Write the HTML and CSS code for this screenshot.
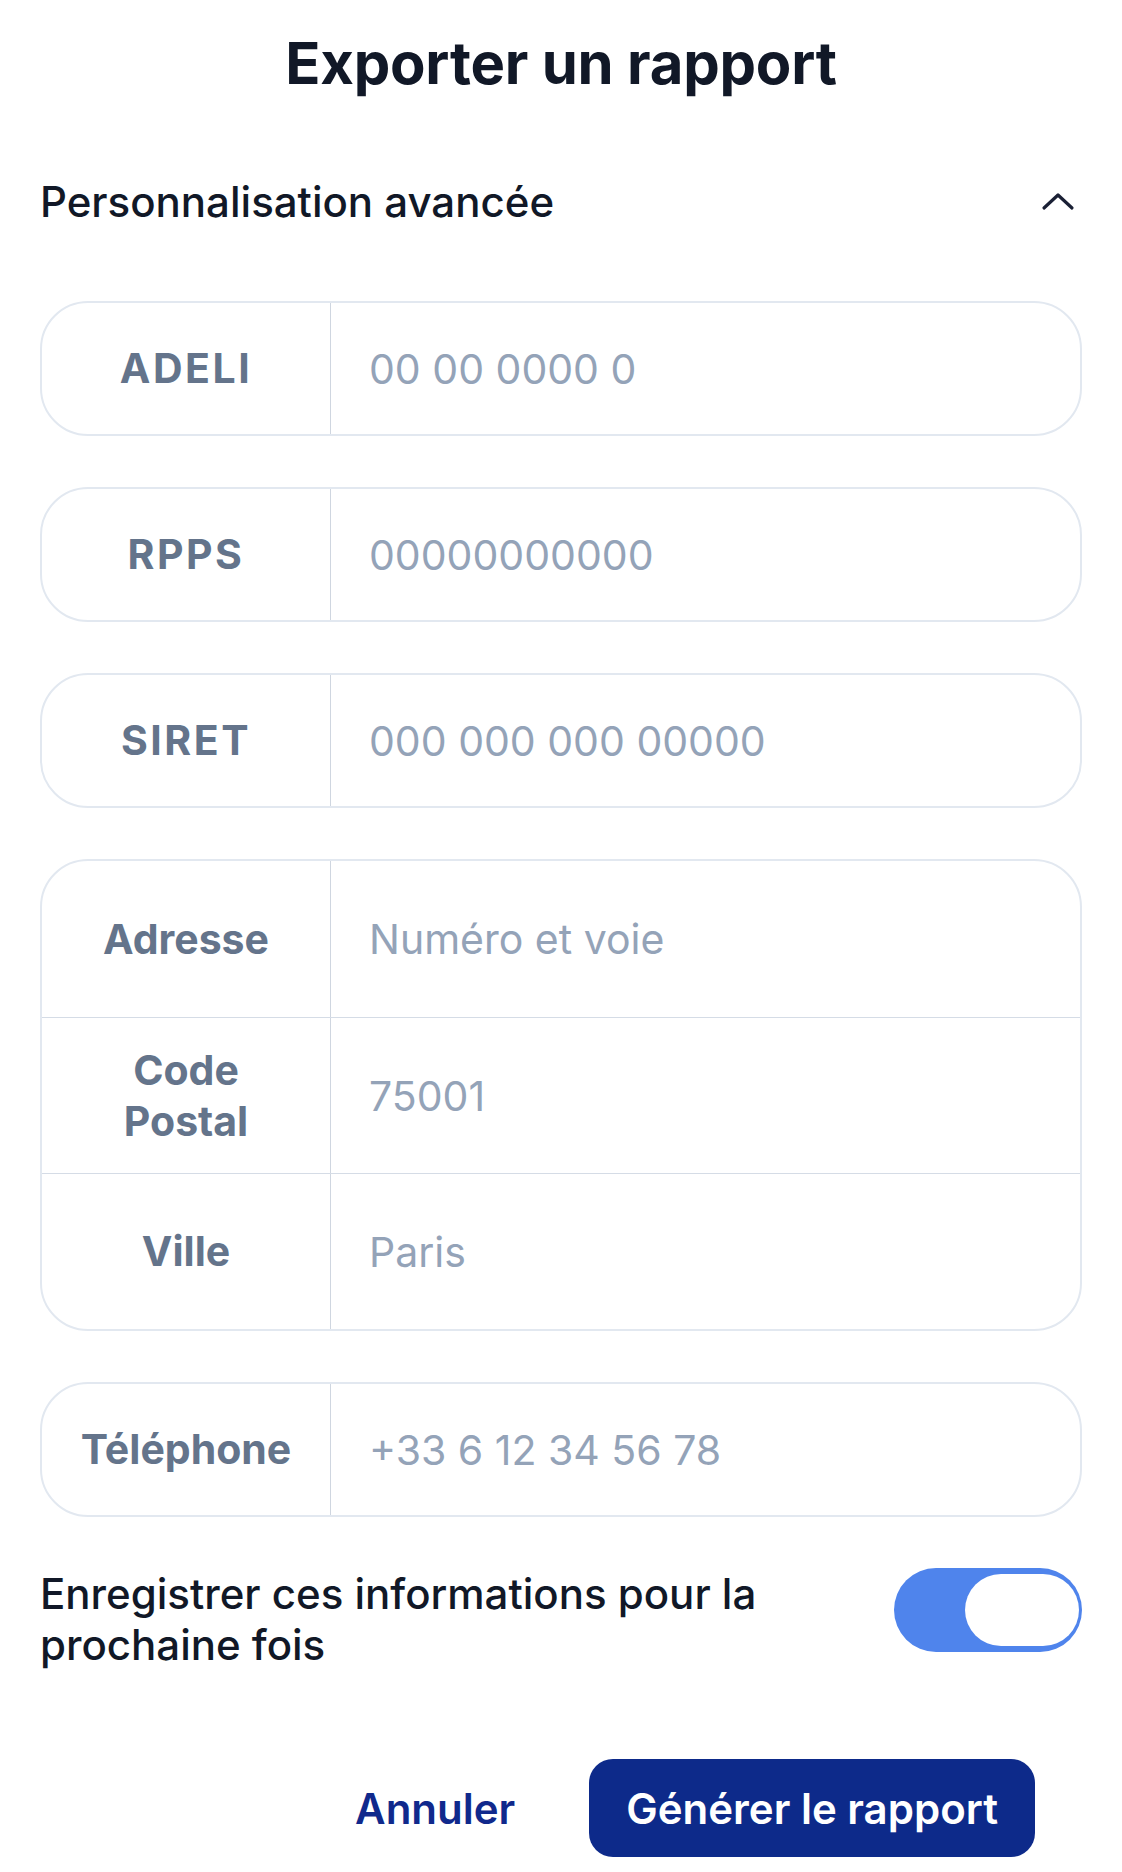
FILE: index.html
```html
<!DOCTYPE html>
<html lang="fr">
<head>
<meta charset="utf-8">
<title>Exporter un rapport</title>
<link rel="stylesheet" href="styles.css">
</head>
<body>
<div class="sheet">
  <h1 class="title">Exporter un rapport</h1>

  <div class="section-head">
    <span class="section-title">Personnalisation avancée</span>
    <svg class="chevron" viewBox="0 0 34 20" width="34" height="20" aria-hidden="true">
      <path d="M3 17 L17 4 L31 17" fill="none" stroke="#1a2035" stroke-width="3.2" stroke-linecap="round" stroke-linejoin="round"/>
    </svg>
  </div>

  <div class="fields">
    <div class="field">
      <div class="label caps">ADELI</div>
      <div class="input">00 00 0000 0</div>
    </div>
    <div class="field">
      <div class="label caps">RPPS</div>
      <div class="input">00000000000</div>
    </div>
    <div class="field">
      <div class="label caps">SIRET</div>
      <div class="input">000 000 000 00000</div>
    </div>
    <div class="group">
      <div class="row">
        <div class="label">Adresse</div>
        <div class="input">Numéro et voie</div>
      </div>
      <div class="row">
        <div class="label">Code<br>Postal</div>
        <div class="input">75001</div>
      </div>
      <div class="row">
        <div class="label">Ville</div>
        <div class="input">Paris</div>
      </div>
    </div>
    <div class="field">
      <div class="label">Téléphone</div>
      <div class="input">+33 6 12 34 56 78</div>
    </div>
  </div>

  <div class="save">
    <span class="save-text">Enregistrer ces informations pour la prochaine fois</span>
    <div class="toggle"><div class="knob"></div></div>
  </div>

  <div class="actions">
    <span class="cancel">Annuler</span>
    <span class="primary">Générer le rapport</span>
  </div>
</div>
</body>
</html>
```

FILE: styles.css
```css
* { box-sizing: border-box; }

html, body {
  margin: 0;
  padding: 0;
  background: #ffffff;
}

body {
  font-family: Inter, "Noto Sans", "Liberation Sans", sans-serif;
  color: #111827;
}

.sheet {
  width: 1122px;
  height: 1872px;
  padding: 0 40px 0 40px;
  overflow: hidden;
}

.title {
  margin: 0;
  padding-top: 28px;
  text-align: center;
  font-size: 58px;
  line-height: 70px;
  font-weight: 700;
  color: #111827;
  letter-spacing: -0.2px;
}

.section-head {
  display: flex;
  justify-content: space-between;
  align-items: center;
  margin-top: 78px;
  height: 50px;
}

.section-title {
  font-size: 42px;
  font-weight: 500;
  color: #111827;
}

.chevron {
  margin-right: 7px;
}

.fields {
  display: flex;
  flex-direction: column;
  gap: 51px;
  margin-top: 75px;
}

.field,
.group {
  border: 2px solid #e2e8f0;
  border-radius: 48px;
  overflow: hidden;
}

.field {
  display: flex;
  height: 135px;
}

.row {
  display: flex;
  height: 156px;
}

.row + .row {
  border-top: 1px solid #d5dce6;
}

.label {
  width: 289px;
  flex: none;
  display: flex;
  align-items: center;
  justify-content: center;
  text-align: center;
  border-right: 1px solid #cfd6e0;
  font-size: 41px;
  line-height: 51px;
  font-weight: 700;
  color: #64748b;
}

.caps {
  letter-spacing: 2.5px;
}

.input {
  flex: 1;
  display: flex;
  align-items: center;
  padding-left: 38px;
  font-size: 41px;
  font-weight: 400;
  color: #94a3b8;
}

.save {
  display: flex;
  justify-content: space-between;
  align-items: flex-start;
  gap: 60px;
  margin-top: 51px;
}

.save-text {
  font-size: 42px;
  line-height: 51px;
  font-weight: 500;
  color: #111827;
}

.toggle {
  flex: none;
  width: 188px;
  height: 84px;
  border-radius: 42px;
  background: #4f84ec;
  padding: 6px 3px 6px 71px;
  display: flex;
}

.knob {
  flex: 1;
  background: #ffffff;
  border-radius: 36px;
}

.actions {
  display: flex;
  justify-content: flex-end;
  align-items: center;
  gap: 74px;
  margin-top: 89px;
  padding-right: 47px;
}

.cancel {
  font-size: 42px;
  font-weight: 600;
  color: #10298c;
}

.primary {
  display: inline-flex;
  align-items: center;
  height: 98px;
  padding: 0 37px;
  border-radius: 24px;
  background: #0d2a8a;
  color: #ffffff;
  font-size: 42px;
  font-weight: 600;
}
```
